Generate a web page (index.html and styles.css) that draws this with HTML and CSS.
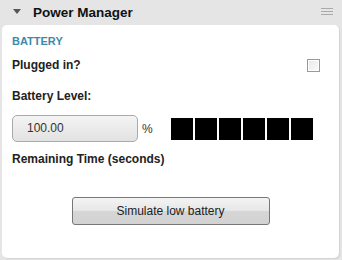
FILE: index.html
```html
<!DOCTYPE html>
<html lang="en">
<head>
    <meta charset="UTF-8">
    <title>Power Manager</title>
    <link rel="stylesheet" href="styles.css">
</head>
<body>
    <div class="header">
        <span class="toggle"></span>
        <span class="title">Power Manager</span>
        <span class="menu"><i></i><i></i><i></i></span>
    </div>
    <div class="panel">
        <h2 class="section">BATTERY</h2>
        <div class="row plugged">
            <label for="plugged">Plugged in?</label>
            <input type="checkbox" id="plugged" class="check">
        </div>
        <div class="label level-label">Battery Level:</div>
        <div class="row level">
            <div class="field">100.00</div>
            <span class="unit">%</span>
            <div class="bars">
                <span></span><span></span><span></span><span></span><span></span><span></span>
            </div>
        </div>
        <div class="label remaining">Remaining Time (seconds)</div>
        <div class="actions">
            <button type="button">Simulate low battery</button>
        </div>
    </div>
</body>
</html>
```

FILE: styles.css
```css
body, html {
    margin: 0;
    height: 100%;
}

body {
    background: #e5e5e5;
    font-family: "Liberation Sans", Arial, sans-serif;
    color: #222;
    overflow: hidden;
}

.header {
    height: 25px;
    display: flex;
    align-items: center;
    padding-left: 13px;
}

.toggle {
    width: 0;
    height: 0;
    border-left: 4.5px solid transparent;
    border-right: 4.5px solid transparent;
    border-top: 5px solid #555;
    margin-right: 12px;
    margin-top: -2px;
}

.title {
    font-weight: bold;
    font-size: 13.5px;
    color: #111;
}

.menu {
    margin-left: auto;
    margin-right: 9px;
    display: flex;
    flex-direction: column;
    gap: 2px;
    margin-top: -2px;
}

.menu i {
    display: block;
    width: 12px;
    height: 1px;
    background: #aaa;
}

.panel {
    margin: 0 3px 0 2px;
    height: 233px;
    background: #fff;
    border-radius: 5px;
    box-shadow: 1px 1px 1px #d2d2d2;
    padding: 9px 0 0 10px;
    box-sizing: border-box;
}

.section {
    margin: 0;
    font-size: 11px;
    font-weight: bold;
    color: #3b8aac;
    line-height: 14px;
}

.row {
    display: flex;
    align-items: center;
}

.plugged {
    margin-top: 10px;
    height: 14px;
    font-weight: bold;
    font-size: 12px;
}

.check {
    margin: 0 0 0 auto;
    margin-right: 19px;
    width: 13px;
    height: 13px;
    appearance: none;
    border: 1px solid #999;
    box-sizing: border-box;
    background: linear-gradient(135deg, #e8e8e8, #fbfbfb);
    box-shadow: inset 0 0 0 1px #fff;
}

.label {
    font-weight: bold;
    font-size: 12px;
    line-height: 14px;
}

.level-label {
    margin-top: 17px;
}

.level {
    margin-top: 12px;
    height: 27px;
}

.field {
    width: 126px;
    height: 27px;
    box-sizing: border-box;
    border: 1px solid #aaa;
    border-radius: 5px;
    background: linear-gradient(#f4f4f4, #e2e2e2);
    font-size: 12px;
    color: #333;
    padding-left: 14px;
    line-height: 25px;
}

.unit {
    font-size: 12px;
    margin-left: 4px;
    color: #333;
}

.bars {
    display: flex;
    gap: 2px;
    margin-left: 18px;
}

.bars span {
    width: 22px;
    height: 22px;
    background: #000;
}

.remaining {
    margin-top: 10px;
}

.actions {
    display: flex;
    justify-content: center;
    margin-top: 31px;
    padding-right: 10px;
}

button {
    width: 198px;
    height: 28px;
    border: 1px solid #777;
    border-radius: 3px;
    background: linear-gradient(#f4f4f4, #e6e6e6 50%, #d6d6d6 52%, #d2d2d2);
    font-family: "Liberation Sans", Arial, sans-serif;
    font-size: 12px;
    color: #222;
    padding: 0;
}
```
